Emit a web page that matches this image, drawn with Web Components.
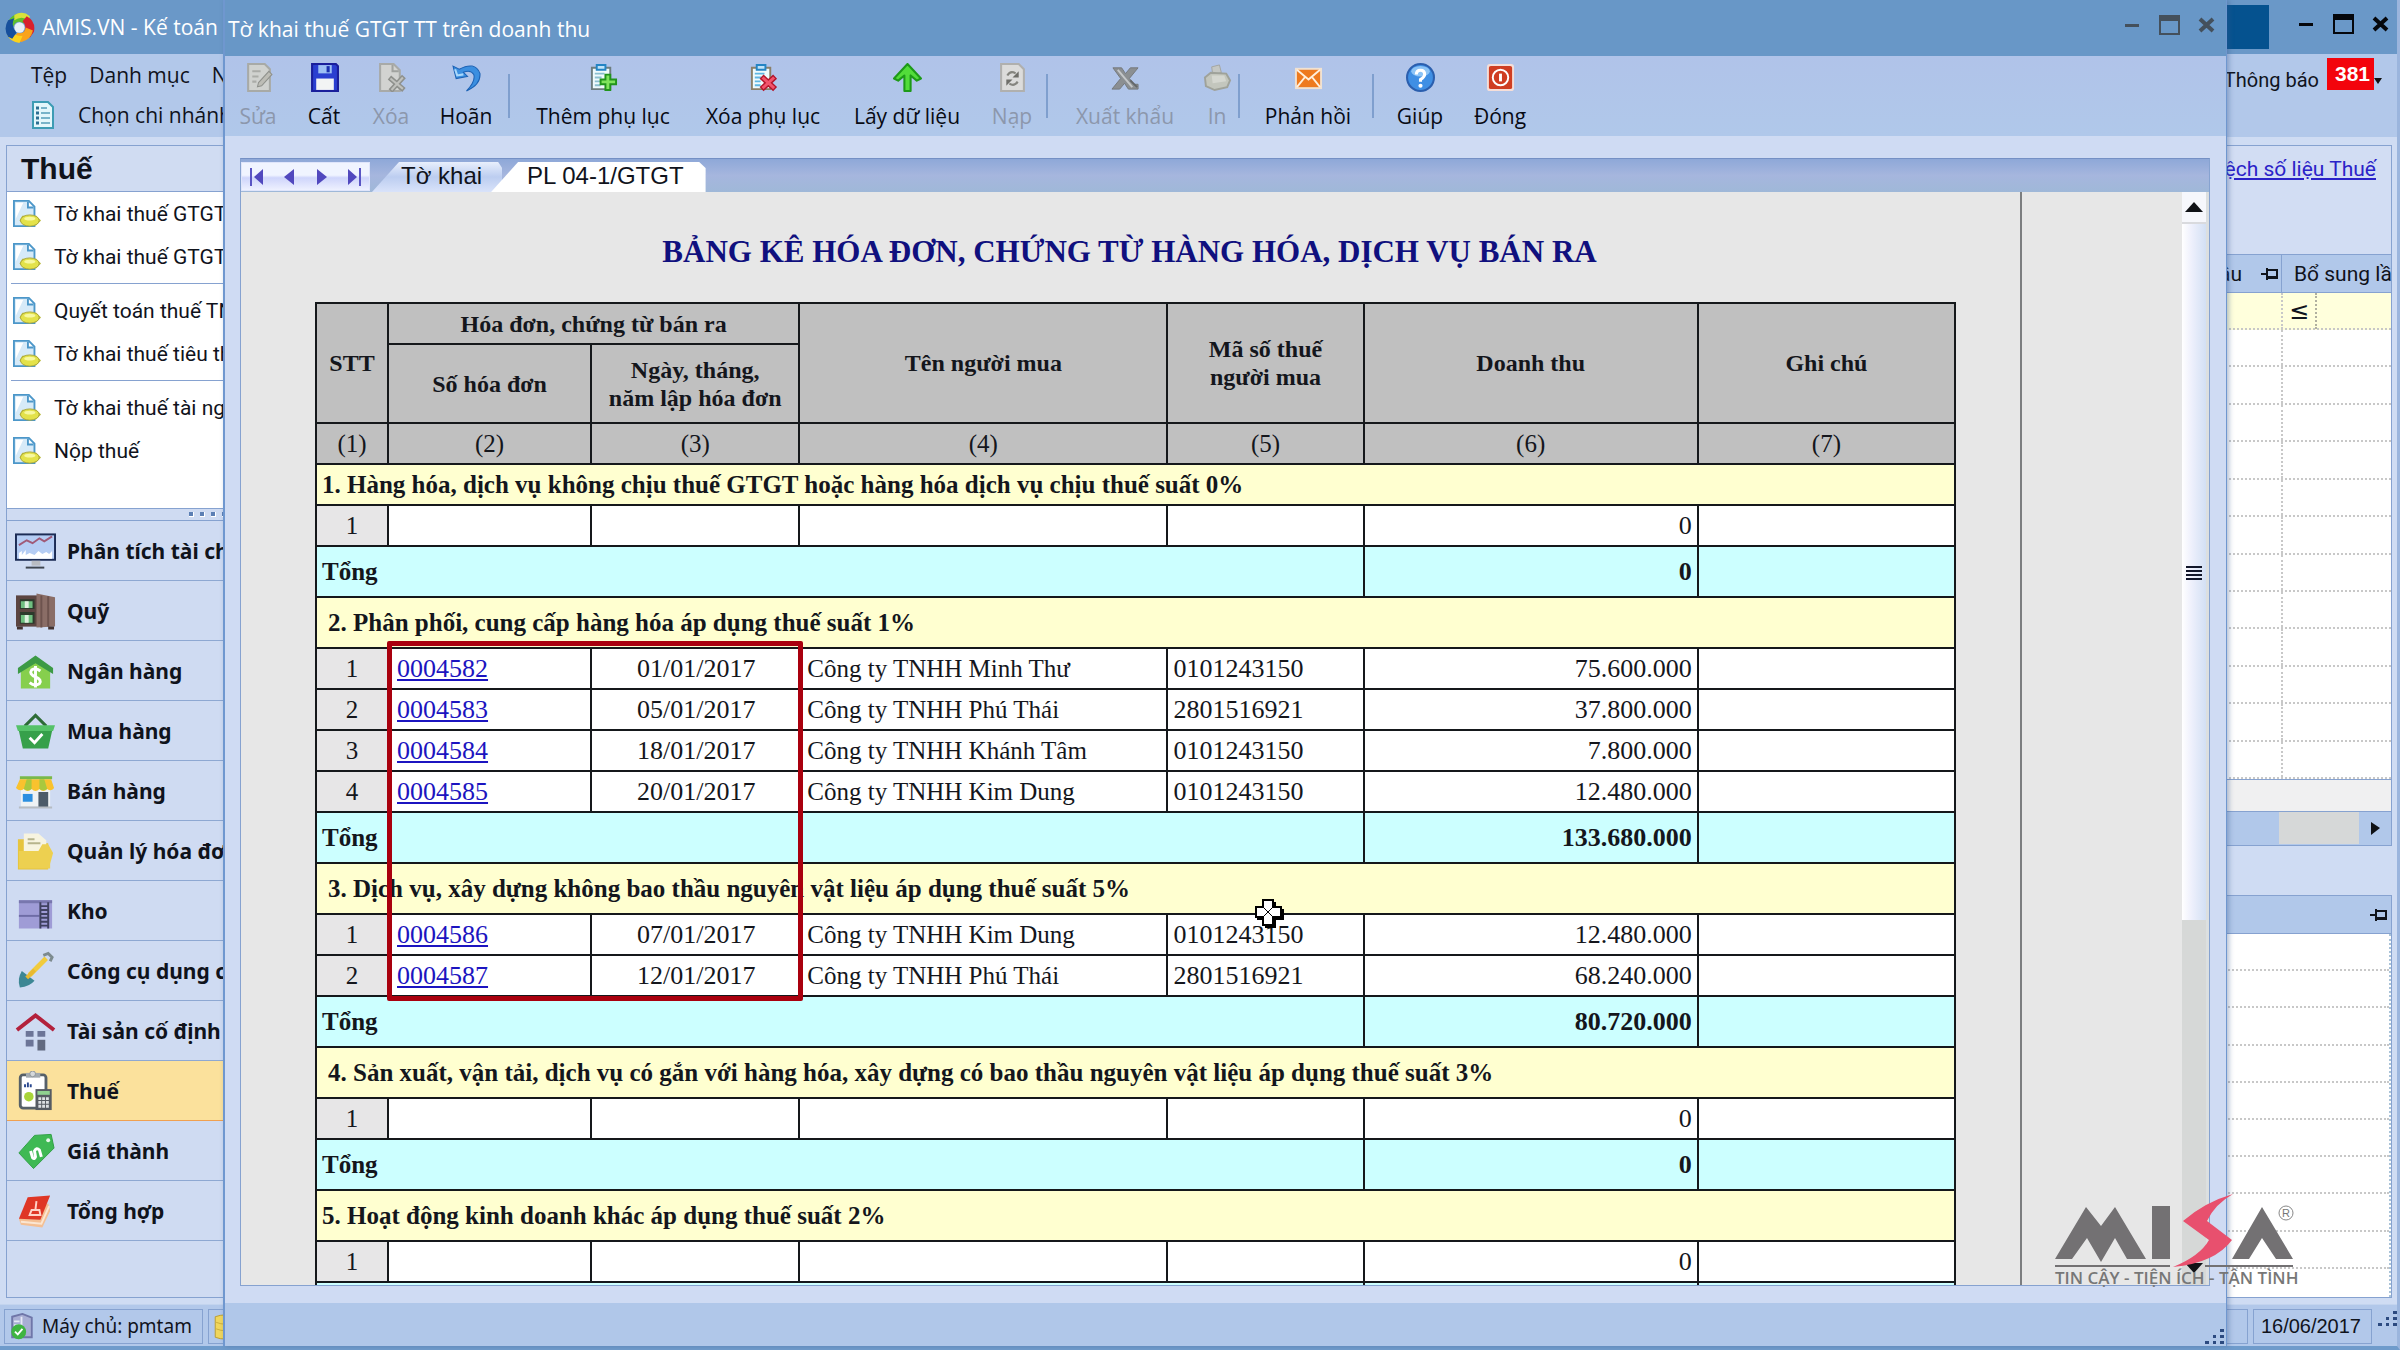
<!DOCTYPE html>
<html lang="vi">
<head>
<meta charset="utf-8">
<title>AMIS.VN - Kế toán</title>
<style>
html,body{margin:0;height:100%;overflow:hidden;background:#5f8fc4}
body{font-family:"Open Sans","Noto Sans",sans-serif;font-size:21px;color:#10131c}
</style>
</head>
<body>
<amis-desktop></amis-desktop>
<script>
const ICONS = {
amis:['0 0 30 30','<path d="M4 9Q9 0 18 2L25 6L19 11Q12 7 9 14Z" fill="#5fbf2d"/><path d="M10 3Q18-2 25 4L24 8Q17 3 10 8Z" fill="#d8e23a"/><path d="M22 4Q31 9 29 19L25 25L19 20Q23 14 18 9Z" fill="#d8202c"/><path d="M28 18Q26 27 17 29L8 27L13 20Q20 22 21 15Z" fill="#f9a31a"/><path d="M15 30Q6 29 3 22L8 18Q10 24 18 23Z" fill="#fbd21c"/><path d="M4 24Q-1 16 4 8L10 6Q6 13 12 20L8 26Z" fill="#174f9c"/><circle cx="15" cy="15" r="5" fill="#e8f0f8"/>'],
list:['0 0 24 28','<path d="M2 1H17L22 6V27H2Z" fill="#e4f7fb" stroke="#3d9cb4" stroke-width="2"/><path d="M5 7H8M5 12H8M5 17H8M5 22H8" stroke="#2b6f92" stroke-width="3"/><path d="M10 7H16M10 12H19M10 17H19M10 22H19" stroke="#79b4c9" stroke-width="2"/>'],
edit:['0 0 28 28','<path d="M4 1H20L25 6V27H4Z" fill="#d0d2cf" stroke="#a8aaa6" stroke-width="2"/><path d="M8 8H16M8 13H14M8 18H12" stroke="#aaaca8" stroke-width="2"/><path d="M14 19L24 8L27 11L17 22L13 23Z" fill="#bdbdb6" stroke="#8f918c"/>'],
save:['0 0 28 28','<path d="M2 1H25L27 3V27H2Z" fill="#2a3fd0" stroke="#1a1f9b" stroke-width="2"/><path d="M8 2H21V10H8Z" fill="#9dc0f4"/><path d="M16 3H19V9H16Z" fill="#1a2fae"/><path d="M6 15H23V26H6Z" fill="#f2f4f4"/>'],
del:['0 0 28 28','<path d="M3 1H16L22 7V27H3Z" fill="#d2d3d1" stroke="#a8aaa8" stroke-width="2"/><path d="M15 2V8H21" fill="none" stroke="#a0a29f" stroke-width="2"/><path d="M12 14L26 26M26 13L13 27" stroke="#8e908c" stroke-width="5"/><path d="M13 15L25 25M25 14L14 26" stroke="#c0c1bd" stroke-width="2"/>'],
undo:['0 0 28 28','<path d="M1 3L4 15L15 13L11 9Q18 6 21 11Q23 18 14 27Q28 21 27 10Q22-2 7 6Z" fill="#3b8fe0" stroke="#1c62b4"/><path d="M3 6L5 12L11 11" fill="none" stroke="#a9d8fb" stroke-width="2"/>'],
addclip:['0 0 30 28','<path d="M3 4H22V26H3Z" fill="#eefafc" stroke="#6d7d7e" stroke-width="2"/><path d="M8 1H17V6H8Z" fill="#bfe4fa" stroke="#2384c4" stroke-width="2"/><path d="M6 10H16M6 14H13M6 18H12M6 22H12" stroke="#8bbfcf" stroke-width="2"/><path d="M17 11H22V16H28V21H22V27H17V21H12V16H17Z" fill="#7fe35c" stroke="#21941b" stroke-width="2"/>'],
delclip:['0 0 30 28','<path d="M3 4H22V26H3Z" fill="#eefafc" stroke="#8a7f68" stroke-width="2"/><path d="M8 1H17V6H8Z" fill="#bfe4fa" stroke="#2384c4" stroke-width="2"/><path d="M6 10H16M6 14H13M6 18H12M6 22H12" stroke="#5fb6e2" stroke-width="2"/><path d="M13 13L27 26M27 13L13 26" stroke="#b3162b" stroke-width="6"/><path d="M14 14L26 25M26 14L14 25" stroke="#f2546c" stroke-width="3"/>'],
up:['0 0 28 28','<path d="M14 1L27 15L23 17L17 12V27H11V12L5 17L1 15Z" fill="#52dc3a" stroke="#1d9a18" stroke-width="2" stroke-linejoin="round"/>'],
reload:['0 0 28 28','<path d="M3 1H20L25 6V27H3Z" fill="#dcdcdb" stroke="#b0b0ae" stroke-width="2"/><path d="M9 12Q12 7 17 10" fill="none" stroke="#85857f" stroke-width="2"/><path d="M20 8V14H14Z" fill="#6f6f6a"/><path d="M19 18Q16 23 11 20" fill="none" stroke="#85857f" stroke-width="2"/><path d="M8 22V16H14Z" fill="#6f6f6a"/>'],
excel:['0 0 30 28','<path d="M2 4H11L15 10L20 4H28L19 15L24 21H28V26H18L14 20L9 26H1L10 15Z" fill="#8b8f92" stroke="#74787b"/><path d="M7 6L22 24" stroke="#c4c7c9" stroke-width="2"/><path d="M20 17L27 24" stroke="#63676a" stroke-width="2"/>'],
print:['0 0 30 28','<path d="M9 3L17 1L19 9L10 11Z" fill="#c4c7c3" stroke="#a3a5a1"/><path d="M2 14L8 9L24 10L28 17L25 24L12 27L3 23Z" fill="#c3c6bd" stroke="#9fa29a" stroke-width="2"/><path d="M9 12L22 12L24 18L10 20Z" fill="#d5d7d0"/>'],
mail:['0 0 30 28','<path d="M1 4H29V26H1Z" fill="#f0e2d2"/><path d="M3 6H27V24H3Z" fill="#ee7a1e"/><path d="M3 6L15 16L27 6M3 24L11 14M27 24L19 14" fill="none" stroke="#fff0dc" stroke-width="2"/>'],
help:['0 0 28 28','<circle cx="14" cy="14" r="13" fill="#3f8fe4" stroke="#2b5fae" stroke-width="2"/><ellipse cx="14" cy="8" rx="9" ry="5" fill="#8cc4f6"/><path d="M10 11Q10 7 14 7Q18 7 18 11Q18 13 14 16V18" fill="none" stroke="#fff" stroke-width="3"/><circle cx="14" cy="22" r="2" fill="#fff"/>'],
power:['0 0 30 30','<rect x="1" y="1" width="28" height="28" rx="3" fill="#f5ded8"/><rect x="3" y="3" width="24" height="24" rx="2" fill="#cf3d22"/><circle cx="15" cy="15" r="8" fill="none" stroke="#fff" stroke-width="2"/><path d="M15 11V19" stroke="#fff" stroke-width="3"/>'],
task:['0 0 30 30','<path d="M1 1H17L23 7V28H1Z" fill="#d6eaf8" stroke="#4c97c9" stroke-width="2"/><path d="M3 3H11L3 20Z" fill="#fff"/><path d="M16 2V8H22" fill="#fff" stroke="#4c97c9" stroke-width="2"/><path d="M10 17H25L30 22L25 27H12L7 22Z" fill="#b9b93c"/><ellipse cx="18" cy="22" rx="10" ry="6" fill="#e3e24a" stroke="#a8a53a"/><ellipse cx="18" cy="20" rx="6" ry="2" fill="#f7f8a0"/>'],
chart:['0 0 42 40','<rect x="1" y="3" width="40" height="26" fill="#b5cdf4" stroke="#1c2c55" stroke-width="2"/><path d="M4 28V22L7 20V24L11 19V24L15 22L20 24L24 20L28 23L32 21L35 23L38 20V28Z" fill="#fff"/><path d="M4 14L12 9L18 12L25 7L30 10L38 5" fill="none" stroke="#a05a78" stroke-width="2"/><path d="M17 30H26V35H17Z" fill="#b9bcc2"/><path d="M11 36H30V38H11Z" fill="#3f4650"/>'],
safe:['0 0 42 40','<path d="M1 4H24V36H1Z" fill="#5c4541"/><path d="M5 8H20V18H5ZM5 21H20V33H5Z" fill="#2d3a2c"/><path d="M6 10H18V17H6ZM6 24H18V32H6Z" fill="#6fbf80"/><path d="M10 10H14V17H10ZM10 24H14V32H10Z" fill="#dff0df"/><path d="M22 2L41 6V36L22 37Z" fill="#8a6d66"/><path d="M27 4V37M34 5V36" stroke="#6d534e" stroke-width="2"/><path d="M2 36H8V39H2ZM34 36H40V39H34Z" fill="#433230"/>'],
bank:['0 0 42 40','<path d="M6 17L21 6L36 17V38H6Z" fill="#86cf4d"/><path d="M21 4L39 17V23L21 12L3 23V17Z" fill="#3c9a45"/><path d="M26 20Q21 16 17 19Q14 23 21 26Q28 29 25 33Q20 36 15 32M21 15V37" fill="none" stroke="#fff" stroke-width="3"/>'],
basket:['0 0 42 40','<path d="M10 15L21 4L32 15" fill="none" stroke="#2d6b36" stroke-width="3"/><path d="M1 14H41L39 20H3Z" fill="#55c268"/><path d="M4 20H38L34 38H8Z" fill="#36a04a"/><path d="M15 27L20 32L28 23" fill="none" stroke="#fff" stroke-width="3"/>'],
shop:['0 0 42 40','<path d="M6 16H36V36H6Z" fill="#eef2f4"/><path d="M5 5H38V8H5Z" fill="#79b94a"/><path d="M5 8H37L40 17Q37 21 33 18Q29 22 25 18Q21 22 17 18Q13 22 9 18Q5 21 1 17Z" fill="#f9c22e"/><path d="M12 8H17L17 18Q13 21 9 18ZM25 8H30L33 18Q29 21 25 18Z" fill="#a9c83e"/><path d="M8 23H18V31H8Z" fill="#2b8fe0"/><path d="M24 21H34V37H24Z" fill="#4c5b68"/><path d="M4 36H38V38H4Z" fill="#b6bcc2"/>'],
folder:['0 0 42 40','<path d="M3 8H14L17 12H34V39H3Z" fill="#e6c43d"/><path d="M9 2H24L32 9V20H9Z" fill="#f7f4e0"/><path d="M13 8H20M13 12H26" stroke="#b7b48c" stroke-width="2"/><path d="M4 20H24L28 13H34L39 22L36 33V38H4Z" fill="#edd050"/>'],
store:['0 0 42 40','<path d="M4 9H38V38H4Z" fill="#9f9cd6"/><path d="M4 9H38V12H4Z" fill="#7877ae"/><path d="M4 25H25" stroke="#6e6ca6" stroke-width="2"/><path d="M26 11V38M34 11V38M26 15H34M26 19H34M26 23H34M26 27H34M26 31H34M26 35H34" stroke="#3f4160" stroke-width="2"/>'],
shovel:['0 0 42 40','<path d="M15 24L32 7" stroke="#f1cb3d" stroke-width="5"/><path d="M29 4L34 2L38 6L36 10" fill="none" stroke="#7d8b8f" stroke-width="3"/><path d="M7 20L20 30Q15 36 5 37Q2 28 7 20Z" fill="#3d8794"/><path d="M12 27L20 19" stroke="#e8b932" stroke-width="4"/>'],
house:['0 0 42 40','<path d="M2 19L21 4L40 19" fill="none" stroke="#b3213c" stroke-width="4"/><path d="M11 20H19V26H11ZM23 20H31V26H23ZM11 29H19V36H11Z" fill="#6c7597"/><path d="M23 29H31V40H23Z" fill="#626a80"/>'],
tax:['0 0 42 42','<rect x="5" y="4" width="27" height="35" rx="3" fill="#fff" stroke="#566068" stroke-width="3"/><path d="M11 2H26V7H11Z" fill="#a2a9ae"/><circle cx="18" cy="3" r="3" fill="#d5d8da" stroke="#8c9398"/><path d="M10 17V14M13 17V12M16 17V14" stroke="#27468e" stroke-width="2"/><circle cx="14" cy="27" r="5" fill="#a8d438"/><rect x="21" y="19" width="17" height="22" fill="#565b62"/><path d="M23 21H36V25H23Z" fill="#8fd08f"/><path d="M24 29H35M24 33H35M24 37H35" stroke="#dde0e3" stroke-width="3" stroke-dasharray="3 1"/>'],
tag:['0 0 42 40','<path d="M20 4L37 3L40 17L19 38L4 22Z" fill="#3fb954" stroke="#2f9f45"/><circle cx="34" cy="9" r="2" fill="#e7f8ea"/><path d="M16 20L18 27Q20 29 21 26L20 20Q22 16 25 19L27 26" fill="none" stroke="#fff" stroke-width="3"/>'],
book:['0 0 42 40','<path d="M4 28L6 34L28 37L36 20L34 12Z" fill="#f4bf93"/><path d="M13 6L36 4L26 29L4 28Z" fill="#df3625"/><path d="M6 31L27 33L35 15" fill="none" stroke="#fbe6d2" stroke-width="2"/><path d="M22 10L21 18M15 24H26L25 19H17Z" fill="none" stroke="#ffd2c8" stroke-width="2"/>'],
server:['0 0 26 30','<path d="M3 4L14 1L24 5V26H3Z" fill="#a8aed4" stroke="#6f76a8" stroke-width="2"/><path d="M13 4V26M5 9H11M5 13H11" stroke="#e6e9f6" stroke-width="2"/><circle cx="10" cy="20" r="8" fill="#3fb441"/><path d="M6 20L9 23L14 17" fill="none" stroke="#fff" stroke-width="2"/>'],
db:['0 0 26 30','<path d="M2 4Q13 0 24 4V26Q13 30 2 26Z" fill="#f0d65c" stroke="#b99b2c"/><path d="M3 10Q13 14 23 10M3 17Q13 21 23 17" fill="none" stroke="#c9ab38"/>'],
pin:['0 0 17 16','<path d="M0 8H6M6 2V14M6 4H16V12H6" fill="none" stroke="#10141c" stroke-width="2"/><path d="M7 10H16V12H7Z" fill="#10141c"/>'],
min:['0 0 21 20','<path d="M3 9H17V12H3Z" fill="currentColor"/>'],
max:['0 0 21 20','<path d="M1 1H20V19H1Z" fill="none" stroke="currentColor" stroke-width="2"/><path d="M0 1H21V6H0Z" fill="currentColor"/>'],
close:['0 0 21 20','<path d="M4 4L17 16M17 4L4 16" stroke="currentColor" stroke-width="4"/>'],
grip:['0 0 20 16','<path d="M16 0H20V3H16ZM16 6H20V9H16ZM16 12H20V15H16ZM9 6H12V9H9ZM9 12H12V15H9ZM1 12H5V15H1Z" fill="#2c4a80"/>'],
first:['0 0 16 18','<path d="M2 0V18" stroke="#5a55c4" stroke-width="2"/><path d="M14 1V17L5 9Z" fill="#5148be"/>'],
prev:['0 0 16 18','<path d="M13 1V17L3 9Z" fill="#5148be"/>'],
next:['0 0 16 18','<path d="M3 1V17L13 9Z" fill="#5148be"/>'],
last:['0 0 16 18','<path d="M14 0V18" stroke="#5a55c4" stroke-width="2"/><path d="M2 1V17L11 9Z" fill="#5148be"/>'],
sup:['0 0 18 10','<path d="M0 10L9 0L18 10Z" fill="#101216"/>'],
sdown:['0 0 18 10','<path d="M0 0L9 10L18 0Z" fill="#101216"/>'],
sright:['0 0 9 13','<path d="M0 0L9 6L0 13Z" fill="#101216"/>'],
thumb:['0 0 18 16','<path d="M1 2H17M1 6H17M1 10H17M1 14H17" stroke="#11162a" stroke-width="2"/>']
};
class Base extends HTMLElement{
  constructor(){super();this.attachShadow({mode:'open'});}
  connectedCallback(){this.shadowRoot.innerHTML='<style>*{box-sizing:border-box}button{font:inherit;color:inherit;border:0;background:none;padding:0;margin:0}[hidden]{display:none}'+(this.css||'')+'</style>'+this.html();}
}
const icon=(n,w,h)=>`<ui-icon name="${n}" w="${w}" h="${h}"></ui-icon>`;
customElements.define('ui-icon',class extends Base{
  html(){const i=ICONS[this.getAttribute('name')];const w=this.getAttribute('w'),h=this.getAttribute('h');
  return `<style>:host{display:inline-block;flex:none;line-height:0;vertical-align:top;width:${w}px;height:${h}px}svg{display:block}</style><svg width="${w}" height="${h}" viewBox="${i[0]}" aria-hidden="true">${i[1]}</svg>`}
});
customElements.define('window-controls',class extends Base{
  css=':host{display:flex;gap:16px;align-items:center}button{width:21px;height:20px}';
  html(){return `<button aria-label="Thu nhỏ">${icon('min',21,20)}</button><button aria-label="Phóng to">${icon('max',21,20)}</button><button aria-label="Đóng cửa sổ">${icon('close',21,20)}</button>`}
});
customElements.define('tool-button',class extends Base{
  css=':host{display:block}button{width:100%;height:80px;display:flex;flex-direction:column;align-items:center;padding-top:7px;white-space:nowrap;line-height:30px;gap:9px;color:#080b14}button:disabled{color:#8c97ac}';
  html(){const d=this.hasAttribute('off')?'disabled':'';this.style.width=this.getAttribute('w')+'px';return `<button ${d}>${icon(this.getAttribute('icon'),29,29)}<span><slot></slot></span></button>`}
});
customElements.define('tool-separator',class extends Base{
  css=':host{display:block;width:2px;height:44px;margin:18px 5px 18px 1px;background:#7f9fce}';
  html(){return ''}
});
customElements.define('task-item',class extends Base{
  css=':host{display:block}button{display:flex;align-items:center;gap:13px;height:43px;padding-left:6px;white-space:nowrap;font-family:Roboto,sans-serif}';
  html(){return `<button>${icon('task',28,28)}<span><slot></slot></span></button>`}
});
customElements.define('nav-item',class extends Base{
  css=':host{display:block;border-bottom:1px solid #8ea8d2}button{display:flex;align-items:center;gap:11px;width:100%;height:59px;padding-left:8px;white-space:nowrap;font-family:"Noto Sans",sans-serif;font-weight:700;font-size:21px}:host([selected]){border-bottom-color:#f0a050}:host([selected]) button{background:#fbe19c}';
  html(){return `<button>${icon(this.getAttribute('icon'),41,40)}<span><slot></slot></span></button>`}
});
customElements.define('side-bar',class extends Base{
  css=`:host{display:flex;flex-direction:column;width:436px;border:1px solid #86a2d0;background:#cfdbf2}
  h2{margin:0;height:46px;padding-left:14px;font:700 30px/46px "Liberation Sans",sans-serif;border-bottom:1px solid #86a2d0;background:#d0dcf2}
  .tasks{background:#fff;height:317px;border-bottom:1px solid #86a2d0}
  hr{margin:5px 0 5px 4px;border:0;height:1px;background:#86a2d0}
  .split{height:12px;border-bottom:1px solid #86a2d0;display:flex;justify-content:center;align-items:center;gap:6px}
  .split i{width:5px;height:5px;background:#5c7fb4;border-right:1px solid #fff;border-bottom:1px solid #fff}`;
  html(){return `<h2>Thuế</h2><div class="tasks"><task-item>Tờ khai thuế GTGT</task-item><task-item>Tờ khai thuế GTGT</task-item><hr><task-item>Quyết toán thuế TNDN</task-item><task-item>Tờ khai thuế tiêu thụ</task-item><hr><task-item>Tờ khai thuế tài nguyên</task-item><task-item>Nộp thuế</task-item></div>
  <div class="split">${'<i></i>'.repeat(7)}</div><nav>${[['chart','Phân tích tài chính'],['safe','Quỹ'],['bank','Ngân hàng'],['basket','Mua hàng'],['shop','Bán hàng'],['folder','Quản lý hóa đơn'],['store','Kho'],['shovel','Công cụ dụng cụ'],['house','Tài sản cố định'],['tax','Thuế'],['tag','Giá thành'],['book','Tổng hợp']].map(a=>`<nav-item icon="${a[0]}" ${a[0]=='tax'?'selected':''}>${a[1]}</nav-item>`).join('')}</nav>`}
});
customElements.define('list-pane',class extends Base{
  css=`:host{display:flex;flex-direction:column;width:300px;font-family:Roboto,sans-serif}
  .link{height:109px;border:1px solid #86a2d0;border-bottom:0;padding:9px 15px;text-align:right;white-space:nowrap;display:flex;justify-content:flex-end;line-height:28px;background:#d2ddf3}
  a{color:#2a22c8}
  .grid{height:592px;display:flex;flex-direction:column;border:1px solid #86a2d0;background:#f0f0f1}
  .row{display:grid;grid-template-columns:1fr 110px;background:#fff;border-bottom:2px dotted #c8c8c8}
  .row>*{border-left:2px dotted #c8c8c8;white-space:nowrap}
  .row>*:first-child{border-left:0}
  .head{height:38px;background:#b1c8ea;border-bottom:1px solid #86a2d0;line-height:38px}
  .head>*{border-left:1px solid #86a2d0;padding-left:12px}
  .head>*:first-child{display:flex;justify-content:flex-end;align-items:center;gap:19px;padding-right:3px}
  .filter{height:37px;background:#ffffdc}
  .filter span:last-child{display:flex}.filter b{width:34px;border-right:2px dotted #b0b0a0;text-align:center;font:24px/36px "DejaVu Sans",sans-serif}
  .body{flex:1;display:grid;grid-auto-rows:1fr;border-bottom:1px solid #86a2d0}
  .foot{height:31px}
  .bar{height:34px;background:#b1c8ea;border-top:1px solid #86a2d0;display:flex;justify-content:flex-end}
  .bar i{width:80px;background:#d6d8d8;border-bottom:1px solid #b1c8ea}.bar button{width:32px;display:flex;align-items:center;justify-content:center}
  .detail{margin-top:49px;flex:1;border:1px solid #86a2d0;display:flex;flex-direction:column;background:#fff}
  .cap{height:38px;background:#b1c8ea;border-bottom:1px solid #86a2d0;display:flex;justify-content:flex-end;align-items:center;padding-right:4px}
  .line{border-bottom:2px dotted #c8c8c8}.line:last-child{border:0}
  .rows{flex:1;border-right:2px dotted #a9c3d8;display:grid;grid-template-rows:repeat(9,37fr) 28fr}`;
  html(){return `<div class="link"><a href="#">Kiểm tra chênh lệch số liệu Thuế</a></div>
  <div class="grid"><div class="row head"><span>Lần đầu ${icon('pin',17,16)}</span><span>Bổ sung lầ</span></div>
  <div class="row filter"><span></span><span><b>≤</b></span></div><div class="body">${'<div class="row"><span></span><span></span></div>'.repeat(12)}</div><div class="foot"></div><div class="bar"><i></i><button aria-label="Cuộn phải">${icon('sright',9,13)}</button></div></div>
  <div class="detail"><div class="cap">${icon('pin',17,16)}</div><div class="rows">${'<div class="line"></div>'.repeat(10)}</div></div>`}
});
customElements.define('main-window',class extends Base{
  css=`:host{display:flex;flex-direction:column;height:100%;background:#cfdcf3;border-right:3px solid #9bb5dd;border-bottom:4px solid #6f9bcb}
  header{height:54px;flex:none;background:#6a98c8;display:flex;align-items:center;color:#fff;padding:0 6px 0 4px;gap:7px}
  header span{flex:1;white-space:nowrap}header i{width:80px;height:44px;background:#05528f;margin-right:20px}window-controls{color:#05070c;margin-bottom:6px}
  .menus{height:83px;flex:none;background:#b2c8ea;display:flex;justify-content:space-between;line-height:42px;white-space:nowrap}
  .left{padding-left:31px;background:radial-gradient(circle,#7f9ac6 1px,transparent 2px) 6px 4px/8px 9px no-repeat repeat-y,#b2c8ea;background-repeat:repeat-y}
  .m{display:flex;gap:22px;height:40px}.t{display:flex;gap:23px;align-items:center;height:42px}
  .right{display:flex;gap:8px;padding:0 15px;font-family:Roboto,sans-serif;font-size:20px;line-height:52px}
  .right em{font:700 21px/32px "Liberation Sans",sans-serif;background:#f3040c;color:#fff;height:32px;padding:0 4px 0 8px;margin-top:4px}
  .right i{border:4px solid transparent;border-top:6px solid #111;height:0;margin:24px 0 0 -8px}
  main{flex:1;display:flex;justify-content:space-between;padding:8px 5px 6px 6px;min-height:0}
  footer{height:42px;flex:none;background:#b2c8ea;border-top:1px solid #c3d4ee;display:flex;gap:5px;padding:4px 0 2px 4px;font-family:"Noto Sans",sans-serif;font-size:19px;line-height:33px}
  footer span{border:1px solid #86a2d0;display:flex;align-items:center;gap:8px;padding:0 10px 0 4px;white-space:nowrap}
  footer .gap{flex:1;padding:0 0 0 4px}footer .d{font:20px/33px "Liberation Sans",sans-serif;padding:0 10px 0 7px}footer ui-icon{align-self:center}footer .g{align-self:flex-end}`;
  html(){return `<header>${icon('amis',31,31)}<span>AMIS.VN - Kế toán</span><i></i><window-controls></window-controls></header>
  <div class="menus"><div class="left"><div class="m"><span>Tệp</span><span>Danh mục</span><span>Nghiệp vụ</span></div><div class="t">${icon('list',24,28)}<span>Chọn chi nhánh</span></div></div><div class="right"><span>Thông báo</span><em>381</em><i></i></div></div>
  <main><side-bar></side-bar><list-pane></list-pane></main>
  <footer><span>${icon('server',25,28)}Máy chủ: pmtam</span><span class="gap">${icon('db',25,28)}</span><span class="d">16/06/2017</span><div class="g">${icon('grip',20,16)}</div></footer>`}
});
customElements.define('invoice-table',class extends Base{
  css=`:host{display:block;position:relative}
  table{border-collapse:collapse;table-layout:fixed;width:100%;font:26px/28px "Liberation Serif",serif;color:#14161c;background:#fff}
  th,td{border:2px solid #15181b;padding:0 5px;height:41px;font-weight:400;white-space:nowrap;overflow:hidden}
  thead th{background:#c0c0c0;font-weight:700;font-size:24px}thead .tall{height:79px}thead .n th{font-weight:400;font-size:25px}
  .s th{background:#ffffd0;font-weight:700;font-size:25px;text-align:left}.t th,.t td{background:#cff;font-weight:700}
  .t th{text-align:left;font-size:25px}.h{height:51px}.x{padding-left:11px}
  .i{background:#e7e6e7;text-align:center;font-size:25px}.l{padding-left:8px}.p{font-size:25px;padding-left:7px}.c{text-align:center;padding-left:7px}.r{text-align:right}a{color:#1c14c0}
  .mark{position:absolute;left:72px;top:339px;width:416px;height:360px;border:5px solid #a9000e;border-radius:2px;pointer-events:none}`;
  html(){
    const row=(i,a,d,n,m,v)=>`<tr><td class="i">${i}</td><td class="l">${a?`<a href="#">${a}</a>`:''}</td><td class="c">${d}</td><td class="p">${n}</td><td>${m}</td><td class="r">${v}</td><td></td></tr>`;
    const e=row(1,'','','','','0');
    const s=(t,h,x)=>`<tr class="s"><th colspan="7" class="${h?'h':''} ${x?'x':''}">${t}</th></tr>`;
    const t=v=>`<tr class="t"><th colspan="5" class="h">Tổng</th><td class="r">${v}</td><td></td></tr>`;
    return `<table><colgroup>${[72,203,208,368,196,334,257].map(w=>`<col style="width:${w}px">`).join('')}</colgroup><thead>
    <tr><th rowspan="2">STT</th><th colspan="2">Hóa đơn, chứng từ bán ra</th><th rowspan="2">Tên người mua</th><th rowspan="2">Mã số thuế<br>người mua</th><th rowspan="2">Doanh thu</th><th rowspan="2">Ghi chú</th></tr>
    <tr><th class="tall">Số hóa đơn</th><th>Ngày, tháng,<br>năm lập hóa đơn</th></tr>
    <tr class="n">${[1,2,3,4,5,6,7].map(n=>`<th>(${n})</th>`).join('')}</tr></thead><tbody>
    ${s('1. Hàng hóa, dịch vụ không chịu thuế GTGT hoặc hàng hóa dịch vụ chịu thuế suất 0%',0,0)}${e}${t('0')}
    ${s('2. Phân phối, cung cấp hàng hóa áp dụng thuế suất 1%',1,1)}
    ${row(1,'0004582','01/01/2017','Công ty TNHH Minh Thư','0101243150','75.600.000')}${row(2,'0004583','05/01/2017','Công ty TNHH Phú Thái','2801516921','37.800.000')}${row(3,'0004584','18/01/2017','Công ty TNHH Khánh Tâm','0101243150','7.800.000')}${row(4,'0004585','20/01/2017','Công ty TNHH Kim Dung','0101243150','12.480.000')}${t('133.680.000')}
    ${s('3. Dịch vụ, xây dựng không bao thầu nguyên vật liệu áp dụng thuế suất 5%',1,1)}
    ${row(1,'0004586','07/01/2017','Công ty TNHH Kim Dung','0101243150','12.480.000')}${row(2,'0004587','12/01/2017','Công ty TNHH Phú Thái','2801516921','68.240.000')}${t('80.720.000')}
    ${s('4. Sản xuất, vận tải, dịch vụ có gắn với hàng hóa, xây dựng có bao thầu nguyên vật liệu áp dụng thuế suất 3%',1,1)}${e}${t('0')}
    ${s('5. Hoạt động kinh doanh khác áp dụng thuế suất 2%',1,0)}${e}<tr class="t"><th colspan="5" class="h"></th><td></td><td></td></tr></tbody></table><div class="mark"></div>`}
});
customElements.define('scroll-bar',class extends Base{
  css=`:host{display:flex;flex-direction:column;width:27px;background:#d6d8d7;border-right:3px solid #dcdfe0}
  .up{height:32px;background:#f6f7fc;border-bottom:2px solid #d9dade;display:flex;align-items:center;justify-content:center}
  .thumb{flex:0 1 696px;background:linear-gradient(90deg,#fff,#eef0fc 40%,#d3e0f4);display:flex;justify-content:center;padding-top:341px}
  .dn{margin-top:auto;height:30px;display:flex;justify-content:center;padding-top:8px}`;
  html(){return `<button class="up" aria-label="Cuộn lên">${icon('sup',18,10)}</button><div class="thumb">${icon('thumb',18,16)}</div><button class="dn" aria-label="Cuộn xuống">${icon('sdown',18,10)}</button>`}
});
customElements.define('sheet-tabs',class extends Base{
  css=`:host{display:flex;height:33px;background:linear-gradient(#8ea8d8,#a6b6de 50%,#9fb8d8);padding-top:3px;font:24px/28px "Liberation Sans",sans-serif}
  .nav{display:flex;width:129px;height:29px;background:linear-gradient(#f0f4ff 45%,#cfd5fb 55%,#eef1ff);justify-content:space-between;align-items:center;padding:0 7px;border:1px solid #dfe5fb}
  .nav button{width:16px;height:18px}
  .tab{height:30px;white-space:nowrap;padding:0 20px 3px 29px;margin-left:2px;clip-path:polygon(27px 0,97% 0,100% 6px,100% 100%,0 100%);background:linear-gradient(#e8effc,#bccdf0 50%,#d9e3fa);line-height:27px}
  .on{background:#fff;margin-left:-11px;padding:0 22px 3px 36px}`;
  html(){return `<div class="nav">${['first','prev','next','last'].map(n=>`<button aria-label="${n}">${icon(n,16,18)}</button>`).join('')}</div><button class="tab">Tờ khai</button><button class="tab on">PL 04-1/GTGT</button>`}
});
customElements.define('tax-dialog',class extends Base{
  css=`:host{display:flex;flex-direction:column;background:#cfdbf3;border-left:2px solid #6f97cf;border-right:1px solid #6f97cf;box-shadow:2px 0 5px rgba(60,90,140,.4)}
  header{height:56px;flex:none;background:#6897c7;color:#fff;display:flex;align-items:center;padding:2px 9px 0 3px}
  header span{flex:1}window-controls{color:#44505c;margin-bottom:8px}
  .tools{height:80px;flex:none;background:linear-gradient(#b0c3e9,#b0c8ea);display:flex}
  .client{flex:1;min-height:0;margin:22px 16px 17px 15px;border:1px solid #86a2d0;border-top-color:#7590c4;display:flex;flex-direction:column}
  .view{flex:1;min-height:0;display:flex;background:#e7e7e7;overflow:hidden}
  .page{flex:1;min-width:0;margin-right:160px;border-right:2px solid #7c7e80;padding:0 64px 0 74px;overflow:hidden}
  h1{margin:0;height:110px;padding:42px 12px 0 0;font:700 31px/36px "Liberation Serif",serif;color:#10107e;text-align:center;white-space:nowrap}
  footer{height:43px;flex:none;background:#b0c7e9;display:flex;justify-content:flex-end;align-items:flex-end;padding:0 2px 1px}`;
  html(){return `<header><span>Tờ khai thuế GTGT TT trên doanh thu</span><window-controls></window-controls></header>
  <div class="tools"><tool-button icon="edit" w="66" off>Sửa</tool-button><tool-button icon="save" w="66">Cất</tool-button><tool-button icon="del" w="68" off>Xóa</tool-button><tool-button icon="undo" w="82">Hoãn</tool-button><tool-separator></tool-separator>
  <tool-button icon="addclip" w="176">Thêm phụ lục</tool-button><tool-button icon="delclip" w="144">Xóa phụ lục</tool-button><tool-button icon="up" w="144">Lấy dữ liệu</tool-button><tool-button icon="reload" w="66" off>Nạp</tool-button><tool-separator></tool-separator>
  <tool-button icon="excel" w="144" off>Xuất khẩu</tool-button><tool-button icon="print" w="40" off>In</tool-button><tool-separator></tool-separator><tool-button icon="mail" w="126">Phản hồi</tool-button><tool-separator></tool-separator><tool-button icon="help" w="82">Giúp</tool-button><tool-button icon="power" w="78">Đóng</tool-button></div>
  <div class="client"><sheet-tabs></sheet-tabs><div class="view"><div class="page"><h1>BẢNG KÊ HÓA ĐƠN, CHỨNG TỪ HÀNG HÓA, DỊCH VỤ BÁN RA</h1><invoice-table></invoice-table></div><scroll-bar></scroll-bar></div></div>
  <footer>${icon('grip',20,16)}</footer>`}
});
customElements.define('misa-logo',class extends Base{
  css=`:host{display:block;width:240px;color:#6d6b6d;pointer-events:none}svg{display:block}div{font:600 17px/20px "Open Sans",sans-serif;white-space:nowrap;color:#777}`;
  html(){return `<svg width="240" height="74" viewBox="0 0 240 74" role="img" aria-label="MISA"><g fill="#737173"><path d="M0 65L31 13L46 32L60 13L91 65H72L60 44L46 68L32 44L17 65Z"/><path d="M97 12H115V65H97Z"/><path d="M177 65L207 13L238 65H221L207 44L194 65Z"/></g><path d="M0 72H115M150 72H238" stroke="#737173" stroke-width="2"/><path d="M178 0Q150 8 128 27L154 46Q145 62 118 73Q160 69 177 46L152 27Q160 10 178 0Z" fill="#e8506e"/><circle cx="231" cy="19" r="7" fill="none" stroke="#888"/><text x="231" y="23" font-family="Liberation Sans,sans-serif" font-size="11" fill="#777" text-anchor="middle">R</text></svg><div>TIN CẬY - TIỆN ÍCH - TẬN TÌNH</div>`}
});
customElements.define('amis-desktop',class extends Base{
  css=`:host{display:block;position:relative;height:100vh;overflow:hidden}
  tax-dialog{position:absolute;left:223px;right:173px;top:0;bottom:4px}
  misa-logo{position:absolute;right:105px;bottom:62px}
  .cursor{position:absolute;left:1254px;top:898px}`;
  html(){return `<main-window></main-window><tax-dialog></tax-dialog><misa-logo></misa-logo><svg class="cursor" width="31" height="31" viewBox="0 0 31 31"><path d="M10 4H22V11H30V22H22V30H11V22H3V12H10Z" fill="#000"/><path d="M9 2H19V9H27V19H19V27H9V19H2V9H9Z" fill="#fff" stroke="#000" stroke-width="2"/><path d="M9 9L19 19M19 9L9 19" stroke="#000" stroke-width="1"/></svg>`}
});
</script>
</body>
</html>
